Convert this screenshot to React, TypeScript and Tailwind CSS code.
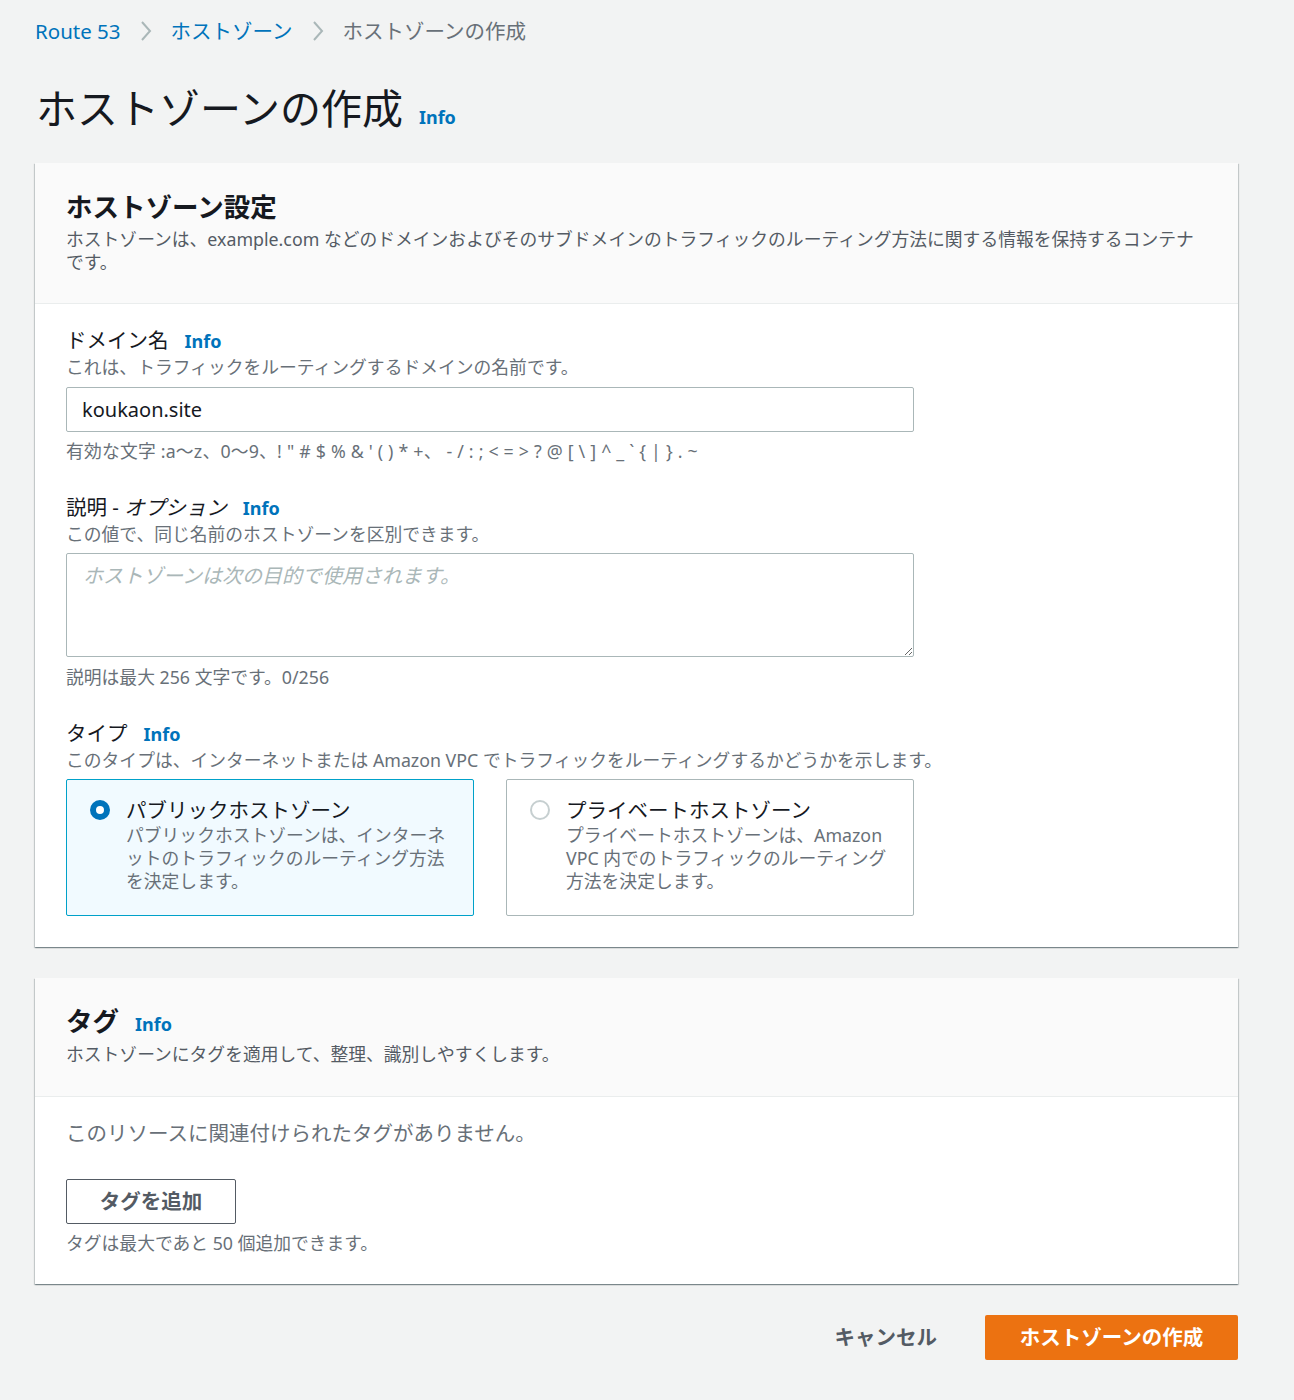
import React from 'react';

const font = { fontFamily: '"Noto Sans", "Noto Sans CJK JP", sans-serif' };

const Info = ({ className = '' }: { className?: string }) => (
  <span className={`font-bold text-[#0073bb] text-[18px] ${className}`}>Info</span>
);

const Chevron = () => (
  <svg width="14" height="22" viewBox="0 0 14 22" className="mx-[18px]">
    <path d="M3 2l8 9-8 9" fill="none" stroke="#aab7b8" strokeWidth="2" />
  </svg>
);

const Card = ({ children }: { children: React.ReactNode }) => (
  <section className="bg-white shadow-[0_1px_1px_0_rgba(0,28,36,0.3),1px_1px_1px_0_rgba(0,28,36,0.15),-1px_1px_1px_0_rgba(0,28,36,0.15)]">
    {children}
  </section>
);

const Field = ({
  label,
  desc,
  children,
}: {
  label: React.ReactNode;
  desc: string;
  children: React.ReactNode;
}) => (
  <div>
    <div className="flex items-baseline gap-[16px] text-[20.5px] leading-[28px] text-[#16191f]">{label}</div>
    <p className="text-[17.8px] leading-[24px] text-[#687078]">{desc}</p>
    {children}
  </div>
);

const Tile = ({ selected, title, desc }: { selected: boolean; title: string; desc: string }) => (
  <div
    className={`flex h-[137px] gap-[16px] rounded-[2px] border pl-[23px] pr-[22px] pt-[16px] ${
      selected ? 'border-[#00a1c9] bg-[#f1faff]' : 'border-[#aab7b8] bg-white'
    }`}
  >
    <div className="pt-[4px]">
      {selected ? (
        <div className="h-[20px] w-[20px] rounded-full border-[6px] border-[#0073bb] bg-white" />
      ) : (
        <div className="h-[20px] w-[20px] rounded-full border-2 border-[#c6cfd0] bg-white" />
      )}
    </div>
    <div>
      <div className="text-[20.5px] leading-[28px] text-[#16191f]">{title}</div>
      <p className="text-[17.8px] leading-[23px] text-[#687078]">{desc}</p>
    </div>
  </div>
);

export default function App() {
  return (
    <div style={font} className="min-h-[1400px] bg-[#f2f3f3] pl-[35px] pr-[56px] pt-[16px] pb-[40px]">
      <nav className="flex items-center text-[20.5px] leading-[30px]">
        <span className="text-[#0073bb]">Route 53</span>
        <Chevron />
        <span className="text-[#0073bb]">ホストゾーン</span>
        <Chevron />
        <span className="text-[#687078]">ホストゾーンの作成</span>
      </nav>

      <div className="mt-[34px] flex items-baseline gap-[16px] pl-[1px]">
        <h1 className="text-[41px] leading-[56px] text-[#16191f]">ホストゾーンの作成</h1>
        <Info />
      </div>

      <div className="mt-[27px] flex flex-col gap-[31px]">
        <Card>
          <div className="border-b border-[#eaeded] bg-[#fafafa] px-[31px] pt-[26px] pb-[29px]">
            <h2 className="text-[26.5px] font-bold leading-[36px] text-[#16191f]">ホストゾーン設定</h2>
            <p className="mt-[3px] text-[17.8px] leading-[23px] text-[#545b64]">
              ホストゾーンは、example.com などのドメインおよびそのサブドメインのトラフィックのルーティング方法に関する情報を保持するコンテナです。
            </p>
          </div>
          <div className="flex flex-col gap-[30px] px-[31px] pt-[22px] pb-[31px]">
            <Field
              label={
                <>
                  <span>ドメイン名</span>
                  <Info />
                </>
              }
              desc="これは、トラフィックをルーティングするドメインの名前です。"
            >
              <div className="mt-[8px] flex h-[45px] w-[848px] items-center rounded-[2px] border border-[#aab7b8] bg-white px-[15px] text-[20px] text-[#16191f]">
                koukaon.site
              </div>
              <p className="mt-[7px] text-[17.8px] leading-[24px] tracking-[0.2px] text-[#687078]">
                有効な文字 :a〜z、0〜9、! " # $ % &amp; ' ( ) * +、 - / : ; &lt; = &gt; ? @ [ \ ] ^ _ ` {'{'} | {'}'} . ~
              </p>
            </Field>

            <Field
              label={
                <>
                  <span>
                    説明 - <i>オプション</i>
                  </span>
                  <Info />
                </>
              }
              desc="この値で、同じ名前のホストゾーンを区別できます。"
            >
              <textarea
                readOnly
                placeholder="ホストゾーンは次の目的で使用されます。"
                className="mt-[7px] block h-[104px] w-[848px] rounded-[2px] border border-[#aab7b8] bg-white px-[16px] py-[7px] text-[20px] italic placeholder:text-[#aab7b8] outline-none"
              />
              <p className="mt-[8px] text-[17.8px] leading-[24px] text-[#687078]">説明は最大 256 文字です。0/256</p>
            </Field>

            <Field
              label={
                <>
                  <span>タイプ</span>
                  <Info />
                </>
              }
              desc="このタイプは、インターネットまたは Amazon VPC でトラフィックをルーティングするかどうかを示します。"
            >
              <div className="mt-[7px] grid w-[848px] grid-cols-2 gap-[32px]">
                <Tile
                  selected
                  title="パブリックホストゾーン"
                  desc="パブリックホストゾーンは、インターネットのトラフィックのルーティング方法を決定します。"
                />
                <Tile
                  selected={false}
                  title="プライベートホストゾーン"
                  desc="プライベートホストゾーンは、Amazon VPC 内でのトラフィックのルーティング方法を決定します。"
                />
              </div>
            </Field>
          </div>
        </Card>

        <Card>
          <div className="border-b border-[#eaeded] bg-[#fafafa] px-[31px] pt-[25px] pb-[30px]">
            <div className="flex items-baseline gap-[16px]">
              <h2 className="text-[26.5px] font-bold leading-[36px] text-[#16191f]">タグ</h2>
              <Info />
            </div>
            <p className="mt-[4px] text-[17.8px] leading-[23px] text-[#545b64]">
              ホストゾーンにタグを適用して、整理、識別しやすくします。
            </p>
          </div>
          <div className="px-[31px] pt-[22px] pb-[29px]">
            <p className="text-[20.5px] leading-[28px] text-[#687078]">このリソースに関連付けられたタグがありません。</p>
            <button className="mt-[32px] flex h-[45px] w-[170px] items-center justify-center rounded-[2px] border border-[#545b64] bg-white text-[20.5px] font-bold text-[#545b64]">
              タグを追加
            </button>
            <p className="mt-[7px] text-[17.8px] leading-[24px] text-[#687078]">タグは最大であと 50 個追加できます。</p>
          </div>
        </Card>
      </div>

      <div className="mt-[31px] flex items-center justify-end gap-[48px]">
        <button className="text-[20.5px] font-bold text-[#545b64]">キャンセル</button>
        <button className="flex h-[45px] w-[253px] items-center justify-center rounded-[2px] bg-[#ec7211] text-[20.5px] font-bold text-white">
          ホストゾーンの作成
        </button>
      </div>
    </div>
  );
}
